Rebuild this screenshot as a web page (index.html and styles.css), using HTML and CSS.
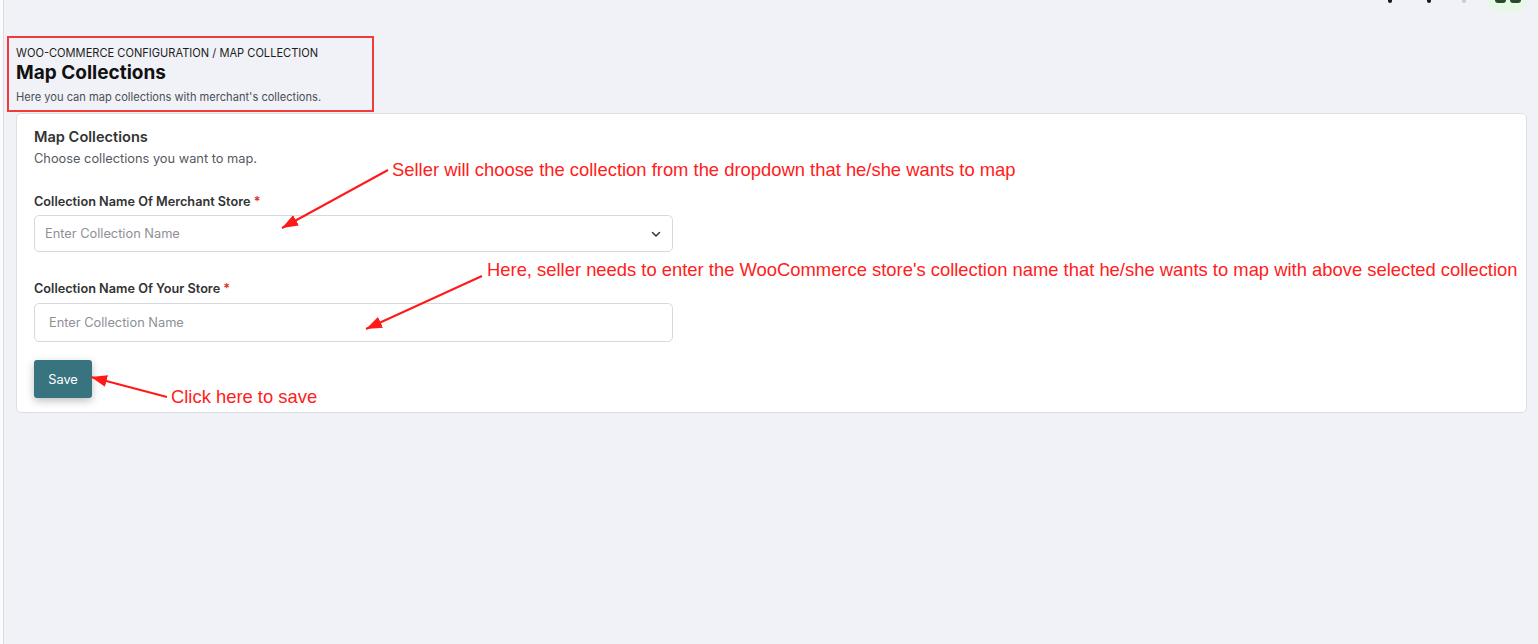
FILE: index.html
```html
<!DOCTYPE html>
<html lang="en">
<head>
<meta charset="utf-8">
<title>Map Collections</title>
<link rel="stylesheet" href="styles.css">
</head>
<body>
<div class="layout">
  <aside class="sidebar-edge"></aside>
  <main class="main">
    <div class="topbar">
      <div class="topbar-items">
        <span class="frag frag-dark"></span>
        <span class="frag frag-dark frag-2"></span>
        <span class="frag frag-light"></span>
        <span class="avatar"><span class="avatar-mark"></span><span class="avatar-mark"></span></span>
      </div>
    </div>
    <header class="page-head">
      <div class="crumb">WOO-COMMERCE CONFIGURATION / MAP COLLECTION</div>
      <h1 class="page-title">Map Collections</h1>
      <p class="page-desc">Here you can map collections with merchant's collections.</p>
    </header>
    <section class="card">
      <h2 class="card-title">Map Collections</h2>
      <p class="card-sub">Choose collections you want to map.</p>
      <div class="field">
        <label class="label">Collection Name Of Merchant Store <span class="req">*</span></label>
        <div class="select">
          <span class="placeholder">Enter Collection Name</span>
          <svg class="chev" width="12" height="12" viewBox="0 0 12 12"><path d="M2.5 4.5 L6 8 L9.5 4.5" fill="none" stroke="#333" stroke-width="1.5" stroke-linecap="round" stroke-linejoin="round"/></svg>
        </div>
      </div>
      <div class="field field-2">
        <label class="label">Collection Name Of Your Store <span class="req">*</span></label>
        <div class="input"><span class="placeholder">Enter Collection Name</span></div>
      </div>
      <button class="btn">Save</button>
    </section>
  </main>
</div>

<svg class="arrows" width="1538" height="644" viewBox="0 0 1538 644">
  <defs>
    <marker id="ah2" viewBox="0 0 10 10" refX="10" refY="5" markerWidth="16" markerHeight="12" markerUnits="userSpaceOnUse" orient="auto" preserveAspectRatio="none">
      <path d="M0 0 L10 5 L0 10 Z" fill="#ff1a1a"/>
    </marker>
  </defs>
  <line x1="388" y1="170" x2="282" y2="228" stroke="#ff1a1a" stroke-width="2" marker-end="url(#ah2)"/>
  <line x1="482" y1="276" x2="366" y2="329" stroke="#ff1a1a" stroke-width="2" marker-end="url(#ah2)"/>
  <line x1="167" y1="397" x2="91" y2="377" stroke="#ff1a1a" stroke-width="2" marker-end="url(#ah2)"/>
</svg>
<div class="note note-1">Seller will choose the collection from the dropdown that he/she wants to map</div>
<div class="note note-2">Here, seller needs to enter the WooCommerce store's collection name that he/she wants to map with above selected collection</div>
<div class="note note-3">Click here to save</div>
</body>
</html>
```

FILE: styles.css
```css
* { box-sizing: border-box; }
html, body { margin: 0; padding: 0; }
body {
  background: #f1f2f7;
  font-family: Inter, "Noto Sans", sans-serif;
  color: #222;
  width: 1538px;
  height: 644px;
  overflow: hidden;
  position: relative;
}
.layout { display: flex; height: 644px; }
.sidebar-edge {
  width: 4px;
  flex: none;
  background: #fbfbfd;
  border-right: 1px solid #d9dbe1;
}
.main {
  flex: 1;
  padding: 0 11px 0 3px;
  display: flex;
  flex-direction: column;
}
.topbar {
  height: 36px;
  overflow: hidden;
}
.topbar-items {
  display: flex;
  justify-content: flex-end;
  align-items: flex-start;
  margin-right: -1px;
}
.frag {
  display: block;
  height: 3px;
  border-radius: 0 0 2px 2px;
}
.frag-dark { width: 4px; background: #1a1a1a; margin-right: 35px; }
.frag-2 { margin-right: 31px; }
.frag-light { width: 4px; background: #c9cbd0; margin-right: 22px; }
.avatar {
  width: 40px;
  height: 12px;
  border-radius: 0 0 20px 20px;
  background: #e7f8e6;
  display: flex;
  justify-content: center;
  gap: 4px;
}
.avatar-mark {
  display: block;
  width: 11px;
  height: 3px;
  background: #2a4a2a;
  border-radius: 0 0 3px 3px;
}
.page-head {
  align-self: flex-start;
  border: 2px solid #f33a3a;
  padding: 8px 51px 6px 7px;
  margin: 0 0 1px 0;
}
.crumb {
  font-size: 11.1px;
  line-height: 14px;
  color: #1d1d1d;
}
.page-title {
  margin: 1px 0 0;
  font-size: 19px;
  line-height: 24px;
  font-weight: 700;
  color: #111;
}
.page-desc {
  margin: 5px 0 0;
  font-size: 11.1px;
  line-height: 14px;
  color: #4b4f56;
}
.card {
  margin-left: 9px;
  background: #fff;
  border: 1px solid #dcdfe4;
  border-radius: 5px;
  padding: 14px 16px 14px 17px;
  height: 300px;
}
.card-title {
  margin: 0;
  font-size: 14.6px;
  line-height: 18px;
  font-weight: 600;
  color: #333;
}
.card-sub {
  margin: 5px 0 0;
  font-size: 12.8px;
  line-height: 16px;
  color: #555a61;
}
.field { margin-top: 27px; width: 639px; }
.field-2 { margin-top: 29px; }
.label {
  display: block;
  font-size: 12.7px;
  line-height: 16px;
  font-weight: 600;
  color: #333;
}
.req { color: #e0312b; }
.select, .input {
  border: 1px solid #d5d8dd;
  border-radius: 5px;
  display: flex;
  align-items: center;
  background: #fff;
}
.select {
  margin-top: 5px;
  height: 37px;
  padding: 0 10px;
  justify-content: space-between;
}
.input {
  margin-top: 6px;
  height: 39px;
  padding: 0 14px;
}
.placeholder {
  font-size: 12.8px;
  color: #8d9096;
}
.btn {
  margin-top: 18px;
  display: block;
  height: 38px;
  width: 58px;
  background: #387480;
  color: #fff;
  border: none;
  border-radius: 3px;
  font-family: Inter, "Noto Sans", sans-serif;
  font-size: 12.8px;
  box-shadow: 0 3px 8px rgba(0,0,0,0.25);
  padding: 0;
}
.arrows {
  position: absolute;
  left: 0;
  top: 0;
  pointer-events: none;
}
.note {
  position: absolute;
  font-family: "Liberation Sans", Arial, sans-serif;
  font-size: 18.4px;
  line-height: 22px;
  color: #ff2020;
  white-space: nowrap;
}
.note-1 { left: 392px; top: 159px; }
.note-2 { left: 487px; top: 259px; }
.note-3 { left: 171px; top: 386px; }
```
